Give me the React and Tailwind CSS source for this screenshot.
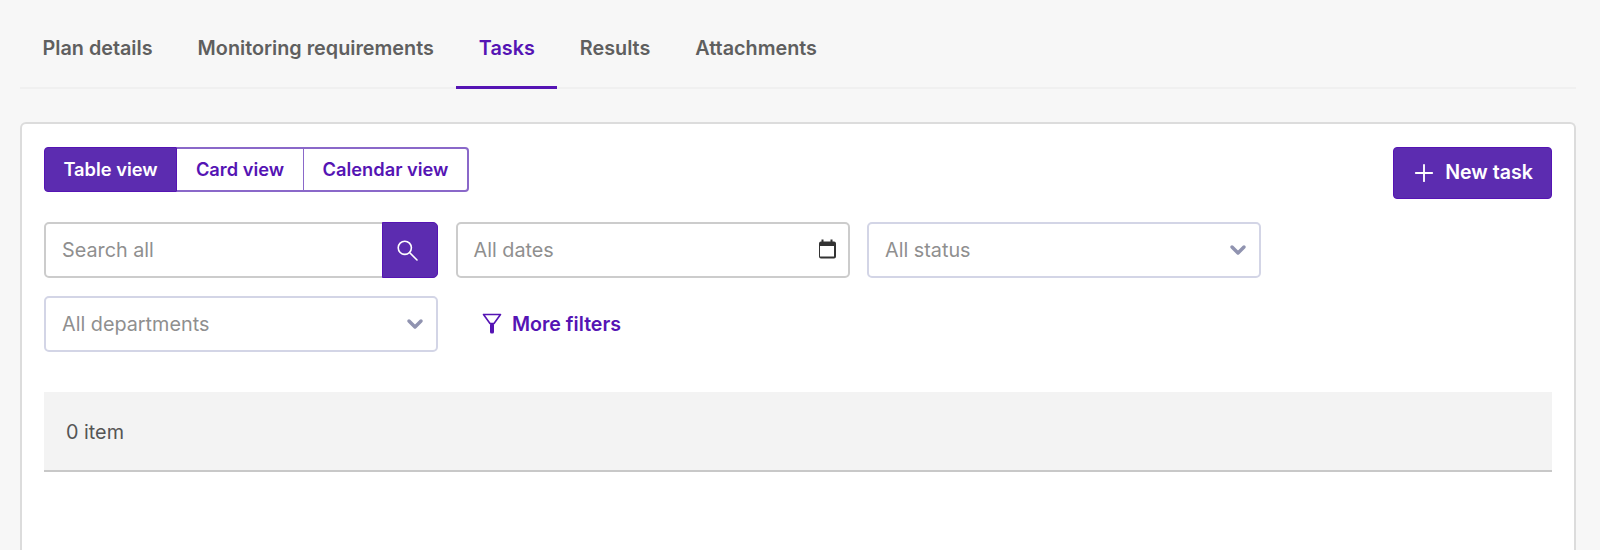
import React from 'react';
import { Plus, ChevronDown } from 'lucide-react';

const font = { fontFamily: 'Inter, sans-serif' };

function CalendarIcon() {
    return (
        <svg width="18" height="20" viewBox="0 0 18 20" fill="none" className="mb-[3px]">
            <path d="M3.5 0.5h2v2h7v-2h2v2h1.5a2 2 0 0 1 2 2v13a2 2 0 0 1-2 2h-13a2 2 0 0 1-2-2v-13a2 2 0 0 1 2-2h.5z" fill="#333333" />
            <rect x="2" y="7" width="14" height="10.5" fill="#ffffff" />
        </svg>
    );
}

function FunnelIcon() {
    return (
        <svg width="20" height="21" viewBox="0 0 20 21" fill="none">
            <path d="M1.5 1.5h17L12 10.5H8z" stroke="#5514b4" strokeWidth="1.6" strokeLinejoin="round" />
            <rect x="8" y="10" width="4" height="10.5" rx="1.5" fill="#5514b4" />
        </svg>
    );
}

function SearchIcon() {
    return (
        <svg width="21" height="21" viewBox="0 0 21 21" fill="none" className="mr-[6px]">
            <circle cx="7.8" cy="7.8" r="6.6" stroke="#ffffff" strokeWidth="1.6" />
            <path d="M12.8 12.8L20 20" stroke="#ffffff" strokeWidth="1.6" strokeLinecap="round" />
        </svg>
    );
}

function SelectBox({ label }) {
    return (
        <div className="w-[394px] h-[56px] flex items-center justify-between pl-[16px] pr-[9px] bg-white border-2 border-[#d3d5e6] rounded-[5px]">
            <span className="pt-[1px] text-[19.8px] text-[#8f8f8f]">{label}</span>
            <ChevronDown size={24} strokeWidth={3.5} className="text-[#9093b0]" />
        </div>
    );
}

export default function App() {
    const tabs = ['Plan details', 'Monitoring requirements', 'Tasks', 'Results', 'Attachments'];

    return (
        <div className="w-[1600px] h-[550px] overflow-hidden bg-[#f7f7f7] pl-[20px] pr-[24px]" style={font}>
            {/* Tabs */}
            <div className="flex h-[89px] border-b-2 border-[#f0f0f0]">
                {tabs.map((t) => (
                    <div
                        key={t}
                        className={
                            t === 'Tasks'
                                ? 'h-[89px] px-[22.5px] pt-[34px] text-[19.8px] leading-[28px] font-semibold text-[#5514b4] border-b-[3px] border-[#5514b4]'
                                : 'h-[89px] px-[22.5px] pt-[34px] text-[19.8px] leading-[28px] font-semibold text-[#5f5f5f]'
                        }
                    >
                        {t}
                    </div>
                ))}
            </div>

            {/* Panel */}
            <div className="mt-[33px] h-[460px] bg-white border-2 border-b-0 border-[#dcdcdc] rounded-t-[6px] px-[22px] pt-[23px]">
                <div className="flex items-start justify-between">
                    <div className="flex h-[45px] text-[18.3px] font-semibold">
                        <div className="w-[133px] flex items-center justify-center bg-[#5c2cb0] border border-[#5514b4] rounded-l-[4px] text-white">
                            Table view
                        </div>
                        <div className="w-[127px] flex items-center justify-center border-y-2 border-r border-[#8a68c9] text-[#5514b4]">
                            Card view
                        </div>
                        <div className="w-[165px] flex items-center justify-center border-y-2 border-r-2 border-[#8a68c9] rounded-r-[4px] text-[#5514b4]">
                            Calendar view
                        </div>
                    </div>
                    <div className="w-[159px] h-[52px] flex items-center justify-center gap-[7px] pr-[2px] bg-[#5c2cb0] border border-[#5514b4] rounded-[4px] text-white text-[19.6px] font-semibold">
                        <Plus size={28} strokeWidth={1.6} />
                        New task
                    </div>
                </div>

                {/* Filters */}
                <div className="mt-[23px] flex gap-[17.5px]">
                    <div className="w-[394px] h-[56px] flex bg-white border-2 border-[#cccccc] rounded-[5px]">
                        <span className="flex-1 flex items-center pl-[16px] pt-[1px] text-[19.8px] text-[#8f8f8f]">Search all</span>
                        <div className="w-[56px] -my-[2px] -mr-[2px] flex items-center justify-center bg-[#5c2cb0] border border-[#5514b4] rounded-r-[5px]">
                            <SearchIcon />
                        </div>
                    </div>
                    <div className="w-[394px] h-[56px] flex items-center justify-between pl-[16px] pr-[12px] bg-white border-2 border-[#cccccc] rounded-[5px]">
                        <span className="pt-[1px] text-[19.8px] text-[#8f8f8f]">All dates</span>
                        <CalendarIcon />
                    </div>
                    <SelectBox label="All status" />
                </div>

                <div className="mt-[18px] flex gap-[18px] items-center">
                    <SelectBox label="All departments" />
                    <div className="flex items-center gap-[10px] ml-[26px] text-[19.6px] font-semibold text-[#5514b4]">
                        <FunnelIcon />
                        <span className="pt-[1px]">More filters</span>
                    </div>
                </div>

                {/* Table header */}
                <div className="mt-[40px] h-[80px] flex items-center pl-[22px] pt-[3px] bg-[#f3f3f3] border-b-2 border-[#c8c8c8] text-[19.8px] text-[#555555]">
                    0 item
                </div>
            </div>
        </div>
    );
}
